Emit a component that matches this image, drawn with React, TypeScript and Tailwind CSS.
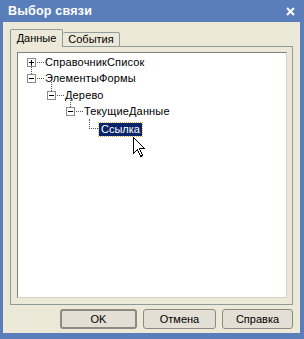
import React from "react";

type Node = {
  label: string;
  level: number;
  kind: "plus" | "minus" | "leaf";
  lineAbove: boolean;
  selected?: boolean;
  h: string;
};

const nodes: Node[] = [
  { label: "СправочникСписок", level: 0, kind: "plus", lineAbove: false, h: "h-[16px]" },
  { label: "ЭлементыФормы", level: 0, kind: "minus", lineAbove: true, h: "h-[17px]" },
  { label: "Дерево", level: 1, kind: "minus", lineAbove: true, h: "h-[16px]" },
  { label: "ТекущиеДанные", level: 2, kind: "minus", lineAbove: true, h: "h-[17px]" },
  { label: "Ссылка", level: 3, kind: "leaf", lineAbove: true, selected: true, h: "h-[17px]" },
];

// left offset of the expander box for each level, inside the tree box
const indent = ["pl-[9px]", "pl-[29px]", "pl-[48px]", "pl-[67px]"];

function Expander({ kind }: { kind: "plus" | "minus" }) {
  return (
    <div className="relative w-[9px] h-[9px] border border-[#8a8a8a] bg-white shrink-0">
      <div className="absolute left-[1px] top-[3px] w-[5px] h-px bg-black" />
      {kind === "plus" && <div className="absolute left-[3px] top-[1px] w-px h-[5px] bg-black" />}
    </div>
  );
}

function TreeRow({ node }: { node: Node }) {
  return (
    <div className={`relative flex items-start ${node.h} ${indent[node.level]}`}>
      {node.kind !== "leaf" ? (
        <>
          {node.lineAbove && (
            <div className="absolute top-[-6px] h-[9px] ml-[4px] border-l border-dotted border-[#555]" />
          )}
          <div className="mt-[3px]">
            <Expander kind={node.kind} />
          </div>
          <div className="mt-[7px] ml-[1px] w-[7px] border-t border-dotted border-[#555]" />
          <span className="ml-px leading-[15px] text-black tracking-[0.15px]">{node.label}</span>
        </>
      ) : (
        <>
          <div className="mt-[-2px] ml-[4px] w-[9px] h-[10px] border-l border-b border-dotted border-[#555]" />
          <span
            className={`ml-[1px] mt-[2px] px-[2px] leading-[13px] ${
              node.selected ? "bg-[#0a246a] text-white outline-1 outline-dotted outline-[#c9b45a]" : "text-black"
            }`}
          >
            {node.label}
          </span>
        </>
      )}
    </div>
  );
}

function Cursor() {
  return (
    <svg className="absolute left-[115px] top-[84px]" width="13" height="21" viewBox="0 0 13 21">
      <path
        d="M0.5 0.5 L0.5 16.5 L4.5 12.5 L7.5 19.5 L9.5 18.5 L6.5 11.5 L11.5 11.5 Z"
        fill="white"
        stroke="black"
        strokeWidth="1"
        shapeRendering="crispEdges"
      />
    </svg>
  );
}

function Button({ label, primary, w }: { label: string; primary?: boolean; w: string }) {
  return (
    <button
      className={`${w} h-[20px] rounded-[3px] bg-[#e3dfd4] text-[11px] text-black ${
        primary ? "border-2 border-[#8d8a7f]" : "border border-[#8d8a7f]"
      }`}
    >
      {label}
    </button>
  );
}

export default function App() {
  return (
    <div
      className="w-[304px] h-[339px] flex flex-col bg-[#5a7eba] text-[11px]"
      style={{ fontFamily: '"Liberation Sans", "DejaVu Sans", sans-serif' }}
    >
      {/* Title bar */}
      <div className="h-[22px] flex items-center justify-between pl-[8px] pr-[9px] shrink-0">
        <span className="text-white font-bold text-[12.5px] tracking-[0.2px]">Выбор связи</span>
        <svg width="9" height="9" viewBox="0 0 9 9">
          <path d="M1 1 L8 8 M8 1 L1 8" stroke="white" strokeWidth="2" />
        </svg>
      </div>

      {/* Window body */}
      <div className="flex-1 flex flex-col bg-[#ece9d8] ml-[3px] mr-[4px] mb-[6px] pl-[7px] pr-[7px] pt-[7px]">
        {/* Tabs */}
        <div className="flex items-end h-[18px] relative z-10">
          <div className="h-[18px] w-[53px] border border-b-0 border-[#919b9c] rounded-t-[2px] bg-[#ece9d8] flex items-center justify-center pb-[1px]">
            Данные
          </div>
          <div className="h-[15px] w-[57px] border border-l-0 border-[#919b9c] rounded-t-[2px] bg-[#ece9d8] flex items-center justify-center">
            События
          </div>
        </div>

        {/* Tab panel */}
        <div className="h-[259px] mt-[-1px] border border-[#919b9c] pt-[5px] pl-[6px] pr-[5px] pb-[6px] flex">
          <div className="relative flex-1 bg-white border border-[#7f7f7f] border-r-[#d4d0c8] border-b-[#d4d0c8] pt-[2px]">
            {nodes.map((n) => (
              <TreeRow key={n.label} node={n} />
            ))}
            <Cursor />
          </div>
        </div>

        {/* Buttons */}
        <div className="flex gap-[6px] justify-end mt-[4px]">
          <Button label="OK" primary w="w-[77px]" />
          <Button label="Отмена" w="w-[73px]" />
          <Button label="Справка" w="w-[71px]" />
        </div>
      </div>
    </div>
  );
}
